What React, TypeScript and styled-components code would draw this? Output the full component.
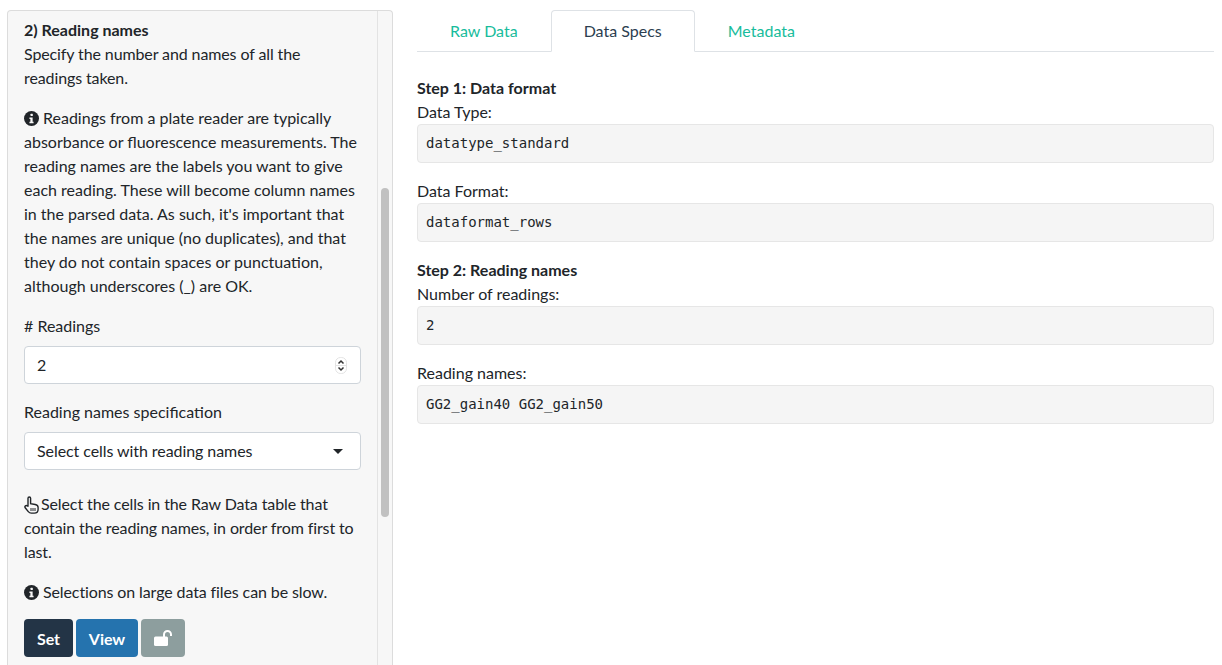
import React from "react";
import styled, { createGlobalStyle } from "styled-components";

const GlobalStyle = createGlobalStyle`
  html, body {
    margin: 0;
    padding: 0;
    height: 665px;
    overflow: hidden;
    background: #fff;
    font-family: "Lato", "Liberation Sans", sans-serif;
    font-size: 16px;
    line-height: 24px;
    color: #212529;
  }
`;

const Page = styled.div`
  display: grid;
  grid-template-columns: 386px 1fr;
  width: 1222px;
  height: 665px;
  padding-left: 7px;
  padding-top: 10px;
  box-sizing: border-box;
`;

const Sidebar = styled.div`
  display: flex;
  height: 660px;
  background: #f7f7f7;
  border: 1px solid #dcdcdc;
  border-bottom: none;
  border-radius: 4px 4px 0 0;
  box-sizing: border-box;
`;

const SidebarBody = styled.div`
  width: 370px;
  box-sizing: border-box;
  padding: 7px 16px 0;
  border-right: 1px solid #e3e3e3;
  overflow: hidden;
`;

const Track = styled.div`
  flex: 1;
  padding: 177px 0 0 2px;
`;

const Thumb = styled.div`
  width: 8px;
  height: 329px;
  margin-left: 1px;
  background: #c1c1c1;
  border-radius: 4px;
`;

const SectionTitle = styled.div`
  font-weight: 700;
  line-height: 24px;
`;

const Para = styled.p<{ $tight?: boolean }>`
  margin: 0 0 16px;
  line-height: 24px;
  letter-spacing: ${({ $tight }) => ($tight ? "-0.11px" : "normal")};
`;

const InfoIcon = styled.svg`
  width: 15px;
  height: 15px;
  vertical-align: -2px;
  margin-right: 4px;
`;

const HandIcon = styled.svg`
  width: 15px;
  height: 18px;
  vertical-align: -4px;
  margin-right: 2px;
`;

const FieldLabel = styled.div`
  line-height: 24px;
  margin-bottom: 8px;
`;

const Field = styled.div`
  display: flex;
  align-items: center;
  justify-content: space-between;
  height: 38px;
  box-sizing: border-box;
  background: #fff;
  border: 1px solid #ced4da;
  border-radius: 4px;
  margin-bottom: 16px;
`;

const NumberField = styled(Field)`
  padding: 0 13px 0 12px;
`;

const SelectField = styled(Field)`
  padding: 0 17px 0 12px;
  margin-bottom: 22px;
  letter-spacing: -0.07px;
`;

const Spinner = styled.svg`
  width: 12px;
  height: 17px;
`;

const Caret = styled.div`
  width: 0;
  height: 0;
  border-left: 5px solid transparent;
  border-right: 5px solid transparent;
  border-top: 5px solid #212529;
`;

const Buttons = styled.div`
  display: flex;
  gap: 3px;
  margin-top: -1px;
`;

const Btn = styled.button<{ $bg: string; $w: number }>`
  width: ${({ $w }) => $w}px;
  height: 38px;
  padding: 0;
  display: flex;
  align-items: center;
  justify-content: center;
  border: none;
  border-radius: 4px;
  background: ${({ $bg }) => $bg};
  color: #fff;
  font-family: inherit;
  font-weight: 700;
  font-size: 16px;
`;

const Main = styled.div`
  padding: 0 8px 0 24px;
`;

const Tabs = styled.div`
  display: flex;
  align-items: flex-start;
  height: 42px;
  box-sizing: border-box;
  border-bottom: 1px solid #dee2e6;
`;

const Tab = styled.div<{ $active?: boolean }>`
  height: ${({ $active }) => ($active ? 42 : 41)}px;
  box-sizing: border-box;
  padding: 0 32px;
  display: flex;
  align-items: center;
  color: ${({ $active }) => ($active ? "#2c3e50" : "#18bc9c")};
  background: ${({ $active }) => ($active ? "#fff" : "transparent")};
  border: 1px solid ${({ $active }) => ($active ? "#dee2e6" : "transparent")};
  border-bottom: ${({ $active }) => ($active ? "1px solid #fff" : "none")};
  border-radius: 4px 4px 0 0;
`;

const StepTitle = styled.div<{ $top: number }>`
  margin-top: ${({ $top }) => $top}px;
  font-weight: 700;
  line-height: 24px;
`;

const OutputLabel = styled.div`
  line-height: 24px;
`;

const Verbatim = styled.pre`
  margin: 0 0 16px;
  height: 39px;
  box-sizing: border-box;
  padding: 0 8px 2px;
  display: flex;
  align-items: center;
  background: #f5f5f5;
  border: 1px solid #e6e6e6;
  border-radius: 4px;
  font-family: "DejaVu Sans Mono", "Liberation Mono", monospace;
  font-size: 14px;
  color: #212529;
`;

const Info = () => (
  <InfoIcon viewBox="0 0 16 16">
    <circle cx="8" cy="8" r="8" fill="#212529" />
    <rect x="7" y="3" width="2.4" height="2.4" rx="0.4" fill="#f7f7f7" />
    <path d="M5.8 7h3.4v4.4h1V13H5.8v-1.6h1V8.6h-1z" fill="#f7f7f7" />
  </InfoIcon>
);

const App = () => (
  <>
    <GlobalStyle />
    <Page>
      <Sidebar>
        <SidebarBody>
          <SectionTitle>2) Reading names</SectionTitle>
          <Para $tight>Specify the number and names of all the readings taken.</Para>
          <Para>
            <Info />
            Readings from a plate reader are typically absorbance or fluorescence measurements. The reading names are
            the labels you want to give each reading. These will become column names in the parsed data. As such, it's
            important that the names are unique (no duplicates), and that they do not contain spaces or punctuation,
            although underscores (_) are OK.
          </Para>
          <FieldLabel># Readings</FieldLabel>
          <NumberField>
            2
            <Spinner viewBox="0 0 12 17">
              <rect x="0.5" y="0.5" width="11" height="16" rx="5" fill="#fff" stroke="#e3e3e3" />
              <path d="M0.5 8.500h11" stroke="#e3e3e3" />
              <path d="M3.500 6.500 6 4l2.500 2.500M3.500 10.500 6 13l2.500-2.500" fill="none" stroke="#333" strokeWidth="1.5" />
            </Spinner>
          </NumberField>
          <FieldLabel>Reading names specification</FieldLabel>
          <SelectField>
            Select cells with reading names
            <Caret />
          </SelectField>
          <Para $tight>
            <HandIcon viewBox="0 0 15 18">
              <path
                d="M4 10V2.300a1.300 1.300 0 0 1 2.600 0V7.600l4.600.9c1.700.3 2.900 1.400 2.900 3v1.700c0 2.300-1.600 3.900-3.800 3.900H7.300c-1.300 0-2.200-.5-3-1.500L1.200 11.800c-1-1.500.9-3.100 2.200-1.800z"
                fill="none"
                stroke="#212529"
                strokeWidth="1.400"
              />
              <path d="M7 12v3M9 12v3M11 12v3" stroke="#212529" strokeWidth="1" />
            </HandIcon>
            Select the cells in the Raw Data table that contain the reading names, in order from first to last.
          </Para>
          <Para $tight>
            <Info />
            Selections on large data files can be slow.
          </Para>
          <Buttons>
            <Btn $bg="#233446" $w={49}>Set</Btn>
            <Btn $bg="#2573ae" $w={62}>View</Btn>
            <Btn $bg="#8d9e9e" $w={44}>
              <svg width="19" height="16" viewBox="0 0 19 16">
                <rect x="0" y="6.500" width="14" height="9.500" rx="1.500" fill="#fff" />
                <path d="M10 7V4.500a3.500 3.500 0 0 1 7 0V6" fill="none" stroke="#fff" strokeWidth="2" />
              </svg>
            </Btn>
          </Buttons>
        </SidebarBody>
        <Track>
          <Thumb />
        </Track>
      </Sidebar>
      <Main>
        <Tabs>
          <Tab>Raw Data</Tab>
          <Tab $active>Data Specs</Tab>
          <Tab>Metadata</Tab>
        </Tabs>
        <StepTitle $top={24}>Step 1: Data format</StepTitle>
        <OutputLabel>Data Type:</OutputLabel>
        <Verbatim>datatype_standard</Verbatim>
        <OutputLabel>Data Format:</OutputLabel>
        <Verbatim>dataformat_rows</Verbatim>
        <StepTitle $top={0}>Step 2: Reading names</StepTitle>
        <OutputLabel>Number of readings:</OutputLabel>
        <Verbatim>2</Verbatim>
        <OutputLabel>Reading names:</OutputLabel>
        <Verbatim>GG2_gain40 GG2_gain50</Verbatim>
      </Main>
    </Page>
  </>
);

export default App;
